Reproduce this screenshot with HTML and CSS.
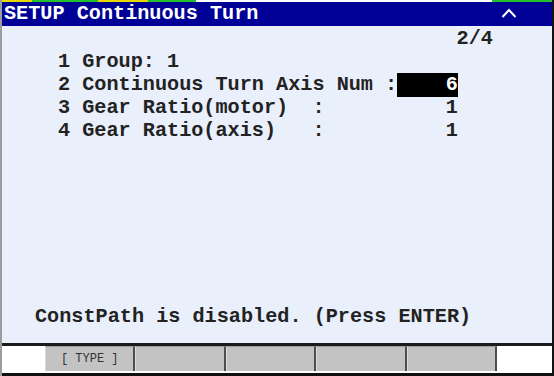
FILE: index.html
```html
<!DOCTYPE html>
<html lang="en">
<head>
    <meta charset="UTF-8">
    <title>SETUP Continuous Turn</title>
    <link rel="stylesheet" href="styles.css">
</head>
<body>
    <div class="screen">
        <!-- barra de estado superior -->
        <div class="status-strip">
            <span class="seg seg-yellow s1"></span>
            <span class="seg seg-green s2"></span>
            <span class="seg seg-yellow s3"></span>
            <span class="seg seg-green s4"></span>
            <span class="seg seg-blank"></span>
            <span class="seg seg-green s6"></span>
        </div>

        <header class="titlebar">
            <span class="title">SETUP Continuous Turn</span>
            <svg class="caret" width="16" height="10" viewBox="0 0 16 10">
                <polyline points="1.5,9 8,2 14.5,9" fill="none" stroke="#fff" stroke-width="2"/>
            </svg>
        </header>

        <main class="content">
            <div class="grid">
                <div class="page-count">2/4</div>
                <div class="row">1 Group: 1</div>
                <div class="row">2 Continuous Turn Axis Num :<span class="value selected">6</span></div>
                <div class="row">3 Gear Ratio(motor)  :      <span class="value">1</span></div>
                <div class="row">4 Gear Ratio(axis)   :      <span class="value">1</span></div>
            </div>
            <div class="message">ConstPath is disabled. (Press ENTER)</div>
        </main>

        <footer class="fkeys">
            <button class="fkey">[ TYPE ]</button>
            <button class="fkey"></button>
            <button class="fkey"></button>
            <button class="fkey"></button>
            <button class="fkey"></button>
        </footer>
    </div>
</body>
</html>
```

FILE: styles.css
```css
/* Estilos generales */
body {
    margin: 0;
    padding: 0;
    background-color: #fff;
}

.screen {
    width: 554px;
    height: 376px;
    box-sizing: border-box;
    border-left: 2px solid #9c9c9c;
    border-right: 2px solid #111;
    display: flex;
    flex-direction: column;
    font-family: 'Courier New', 'Nimbus Mono PS', 'Liberation Mono', monospace;
    font-weight: bold;
    font-size: 20.2px;
}

/* Barra de estado */
.status-strip {
    height: 2px;
    display: flex;
    background-color: #fff;
}

.seg {
    display: block;
    height: 2px;
}

.seg-yellow {
    background-color: #e8d800;
}

.seg-green {
    background-color: #22c02a;
}

.seg-blank {
    flex: 1;
}

.s1 { width: 30px; }
.s2 { width: 66px; }
.s3 { width: 50px; }
.s4 { width: 48px; }
.s6 { width: 60px; }

/* Encabezado */
.titlebar {
    height: 24px;
    background-color: #000096;
    color: #fff;
    display: flex;
    align-items: center;
    justify-content: space-between;
    padding: 0 35px 0 2px;
}

.title {
    line-height: 24px;
    white-space: pre;
}

.caret {
    display: block;
    margin-top: -2px;
}

/* Contenido */
.content {
    flex: 1;
    background-color: #e9effb;
    color: #222;
    padding: 1px 0 15px 33px;
    display: flex;
    flex-direction: column;
    line-height: 23px;
}

.grid {
    width: 37.8ch;
}

.page-count {
    text-align: right;
}

.row {
    white-space: pre;
    padding-left: 23px;
    height: 23px;
}

.value {
    display: inline-block;
    width: 5ch;
    text-align: right;
    vertical-align: top;
}

.value.selected {
    background-color: #000;
    color: #fff;
    height: 24px;
}

.message {
    margin-top: auto;
    white-space: pre;
}

/* Teclas de función */
.fkeys {
    height: 27px;
    border-top: 3px solid #1c1c1c;
    border-bottom: 3px solid #111;
    background-color: #fff;
    display: flex;
    padding-left: 43px;
}

.fkey {
    width: 90.4px;
    height: 25px;
    margin: 0;
    padding: 0;
    border: none;
    border-top: 1px solid #9a9a9a;
    border-left: 1px solid #dcdcdc;
    border-right: 2px solid #4e4e4e;
    background-color: #c3c3c3;
    font-family: 'Courier New', 'Nimbus Mono PS', 'Liberation Mono', monospace;
    font-size: 12px;
    color: #333;
    box-sizing: border-box;
}
```
